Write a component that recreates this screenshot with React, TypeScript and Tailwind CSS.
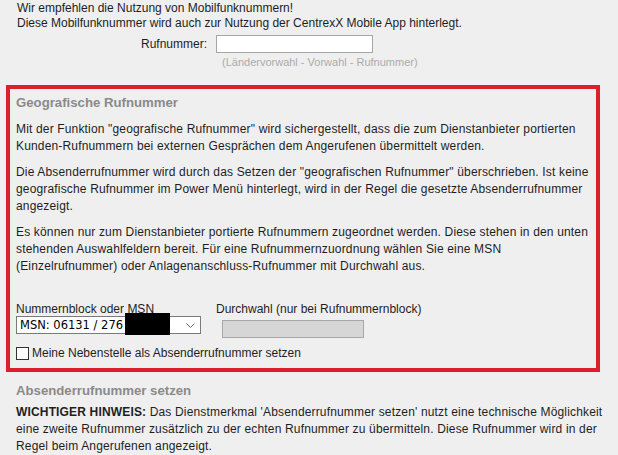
import React from "react";

export default function App() {
  return (
    <div className="w-[618px] h-[455px] overflow-hidden bg-[#efefef] font-['Liberation_Sans',Arial,sans-serif] text-[12px] text-[#1e1e1e]">
      <div className="pl-[17px] pt-[1px] leading-[15px]">
        <p>Wir empfehlen die Nutzung von Mobilfunknummern!</p>
        <p>Diese Mobilfunknummer wird auch zur Nutzung der CentrexX Mobile App hinterlegt.</p>
      </div>
      <div className="flex items-center mt-[4px] pl-[17px]">
        <div className="w-[190px] text-right leading-[18px]">Rufnummer:</div>
        <input
          type="text"
          className="ml-[9px] w-[157px] h-[18px] border border-[#a6a6a6] bg-white outline-none"
        />
      </div>
      <div className="pl-[222px] mt-[3px] text-[11px] leading-[13px] text-[#ababab]">
        (Ländervorwahl - Vorwahl - Rufnummer)
      </div>

      <div className="ml-[6px] mt-[16px] w-[594px] border-4 border-[#dc1f2c] px-[6px] pt-[5px] pb-[8px]">
        <h2 className="text-[13.2px] font-bold leading-[17px] text-[#8a8a8a]">Geografische Rufnummer</h2>
        <div className="tracking-[0.16px] leading-[17px] whitespace-nowrap">
          <p className="mt-[10px]">
            Mit der Funktion "geografische Rufnummer" wird sichergestellt, dass die zum Dienstanbieter portierten
            <br />
            Kunden-Rufnummern bei externen Gesprächen dem Angerufenen übermittelt werden.
          </p>
          <p className="mt-[9px]">
            Die Absenderrufnummer wird durch das Setzen der "geografischen Rufnummer" überschrieben. Ist keine
            <br />
            geografische Rufnummer im Power Menü hinterlegt, wird in der Regel die gesetzte Absenderrufnummer
            <br />
            angezeigt.
          </p>
          <p className="mt-[9px]">
            Es können nur zum Dienstanbieter portierte Rufnummern zugeordnet werden. Diese stehen in den unten
            <br />
            stehenden Auswahlfeldern bereit. Für eine Rufnummernzuordnung wählen Sie eine MSN
            <br />
            (Einzelrufnummer) oder Anlagenanschluss-Rufnummer mit Durchwahl aus.
          </p>
        </div>

        <div className="mt-[27px] flex">
          <div className="w-[185px]">
            <div className="leading-[14px]">Nummernblock oder MSN</div>
            <div className="relative h-[18px] w-[185px] border border-[#7a7a7a] bg-white flex items-center pl-[3px]">
              <span className="font-['DejaVu_Sans',sans-serif] text-[11.5px] leading-[16px] text-black">MSN: 06131 / 276</span>
              <div className="absolute left-[108px] top-[-4px] h-[22px] w-[45px] bg-black" />
              <svg className="absolute right-[5px] top-[6px]" width="9" height="6" viewBox="0 0 9 6">
                <path d="M0.5 0.5 L4.5 4.5 L8.5 0.5" fill="none" stroke="#666" strokeWidth="1" />
              </svg>
            </div>
          </div>
          <div className="ml-[15px]">
            <div className="leading-[14px]">Durchwahl (nur bei Rufnummernblock)</div>
            <div className="mt-[4px] ml-[6px] h-[18px] w-[142px] border border-[#a8a8a8] bg-[#d6d6d6]" />
          </div>
        </div>

        <label className="mt-[8px] flex items-center h-[14px]">
          <span className="inline-block h-[13px] w-[13px] border border-[#333] bg-white" />
          <span className="ml-[3px] leading-[14px]">Meine Nebenstelle als Absenderrufnummer setzen</span>
        </label>
      </div>

      <div className="pl-[16px]">
        <h2 className="mt-[10px] text-[13.2px] font-bold leading-[17px] text-[#8a8a8a]">Absenderrufnummer setzen</h2>
        <p className="mt-[5px] tracking-[0.16px] leading-[17px] whitespace-nowrap">
          <b>WICHTIGER HINWEIS:</b> Das Dienstmerkmal 'Absenderrufnummer setzen' nutzt eine technische Möglichkeit
          <br />
          eine zweite Rufnummer zusätzlich zu der echten Rufnummer zu übermitteln. Diese Rufnummer wird in der
          <br />
          Regel beim Angerufenen angezeigt.
        </p>
      </div>
    </div>
  );
}
